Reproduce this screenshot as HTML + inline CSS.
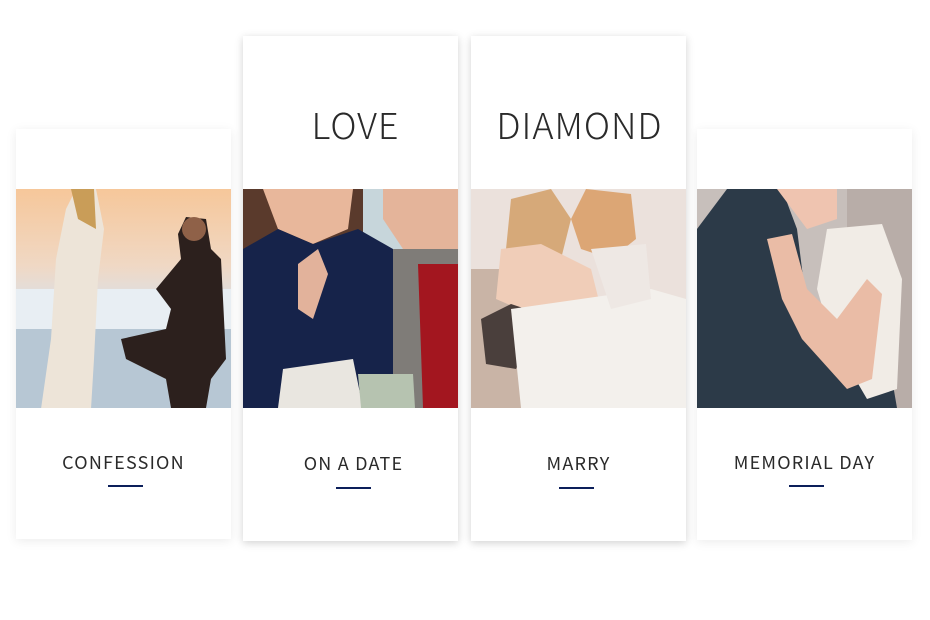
<!DOCTYPE html>
<html><head><meta charset="utf-8"><style>
*{margin:0;padding:0;box-sizing:border-box}
body{width:930px;height:620px;background:#fff;position:relative;overflow:hidden;font-family:"Noto Sans CJK SC","Liberation Sans",sans-serif}
.card{position:absolute;background:#fff;width:215px;box-shadow:0 2px 8px rgba(0,0,0,.18)}
.ph{position:absolute;left:0;top:0;width:215px;height:219px;overflow:hidden}
.lbl{position:absolute;left:0;width:215px;text-align:center;font-size:18px;line-height:18px;letter-spacing:1.2px;color:#2a2a2a;white-space:nowrap}
.ul{position:absolute;width:35px;height:2px;background:#0c1f5a}
.big{position:absolute;left:0;width:215px;text-align:center;font-size:36px;line-height:36px;font-weight:300;color:#2a2a2a;letter-spacing:1px;white-space:nowrap}
</style></head><body>

<div class="card" style="left:16px;top:129px;height:410px;box-shadow:0 2px 10px rgba(0,0,0,.08)">
 <svg class="ph" style="top:60px" viewBox="0 0 215 219" width="215" height="219">
  <defs><linearGradient id="s1" x1="0" y1="0" x2="0" y2="1"><stop offset="0" stop-color="#f6c79a"/><stop offset=".35" stop-color="#f0d8c4"/><stop offset=".55" stop-color="#d9e1ea"/><stop offset="1" stop-color="#a9bccb"/></linearGradient></defs>
  <rect width="215" height="219" fill="url(#s1)"/>
  <rect x="0" y="100" width="215" height="40" fill="#e8eef3"/>
  <rect x="0" y="140" width="215" height="79" fill="#b7c7d4"/>
  <path d="M60 0 L80 0 L88 40 L82 90 L78 170 L75 220 L25 220 L35 150 L40 70 L50 20Z" fill="#ede4d8"/>
  <path d="M55 0 L78 0 L80 40 L62 30Z" fill="#c99d58"/>
  <path d="M170 28 L190 30 L195 60 L205 70 L210 170 L195 190 L190 219 L155 219 L150 190 L110 170 L105 150 L150 140 L155 120 L140 100 L165 70 L162 45Z" fill="#2c201d"/>
  <circle cx="178" cy="40" r="12" fill="#8f6148"/>
 </svg>
 <div class="lbl" style="top:324px">CONFESSION</div>
 <div class="ul" style="left:92px;top:356px"></div>
</div>

<div class="card" style="left:243px;top:36px;height:505px">
 <div class="big" style="top:70px;left:5px">LOVE</div>
 <svg class="ph" style="top:153px" viewBox="0 0 215 219" width="215" height="219">
  <rect width="215" height="219" fill="#c7d6db"/>
  <rect x="0" y="0" width="120" height="219" fill="#5a3a2c"/>
  <path d="M20 0 L110 0 L105 40 L70 55 L35 40Z" fill="#e8b79b"/>
  <path d="M0 60 L35 40 L70 55 L115 40 L150 60 L155 219 L0 219Z" fill="#16234a"/>
  <path d="M55 75 L75 60 L85 85 L70 130 L55 120Z" fill="#e2b29b"/>
  <path d="M140 0 L215 0 L215 60 L160 60 L140 30Z" fill="#e4b49a"/>
  <path d="M150 60 L215 60 L215 219 L150 219Z" fill="#7f7c78"/>
  <path d="M175 75 L215 75 L215 219 L180 219Z" fill="#a3161f"/>
  <path d="M40 180 L110 170 L120 219 L35 219Z" fill="#e9e6e0"/>
  <path d="M115 185 L170 185 L172 219 L118 219Z" fill="#b6c3b0"/>
 </svg>
 <div class="lbl" style="top:418px;left:3px">ON A DATE</div>
 <div class="ul" style="left:93px;top:451px"></div>
</div>

<div class="card" style="left:471px;top:36px;height:505px">
 <div class="big" style="top:70px;left:1px">DIAMOND</div>
 <svg class="ph" style="top:153px" viewBox="0 0 215 219" width="215" height="219">
  <rect width="215" height="219" fill="#ebe1dc"/>
  <rect x="0" y="80" width="60" height="139" fill="#c9b4a6"/>
  <path d="M40 10 L80 0 L100 30 L90 70 L60 80 L35 60Z" fill="#d6a979"/>
  <path d="M115 0 L160 5 L165 50 L140 70 L110 60 L100 30Z" fill="#dca675"/>
  <path d="M30 60 L70 55 L120 80 L130 120 L60 125 L25 110Z" fill="#f0cdb8"/>
  <path d="M10 130 L40 115 L70 125 L45 180 L15 175Z" fill="#4a3f3c"/>
  <path d="M40 120 L180 100 L215 110 L215 219 L50 219Z" fill="#f3f0ec"/>
  <path d="M120 60 L175 55 L180 110 L140 120Z" fill="#eee8e4"/>
 </svg>
 <div class="lbl" style="top:418px">MARRY</div>
 <div class="ul" style="left:88px;top:451px"></div>
</div>

<div class="card" style="left:697px;top:129px;height:411px;box-shadow:0 2px 10px rgba(0,0,0,.08)">
 <svg class="ph" style="top:60px" viewBox="0 0 215 219" width="215" height="219">
  <rect width="215" height="219" fill="#c7bfbb"/>
  <rect x="150" y="0" width="65" height="219" fill="#b8ada8"/>
  <path d="M0 40 L30 0 L85 0 L100 40 L110 120 L150 180 L195 190 L200 219 L0 219Z" fill="#2c3a48"/>
  <path d="M80 0 L140 0 L140 30 L110 40 L95 20Z" fill="#efc4b0"/>
  <path d="M130 40 L185 35 L205 90 L200 200 L170 210 L135 150 L120 100Z" fill="#f1ece6"/>
  <path d="M70 50 L95 45 L110 100 L140 130 L170 90 L185 105 L175 190 L150 200 L105 150 L85 110Z" fill="#eabca6"/>
 </svg>
 <div class="lbl" style="top:324px">MEMORIAL DAY</div>
 <div class="ul" style="left:92px;top:356px"></div>
</div>

</body></html>
